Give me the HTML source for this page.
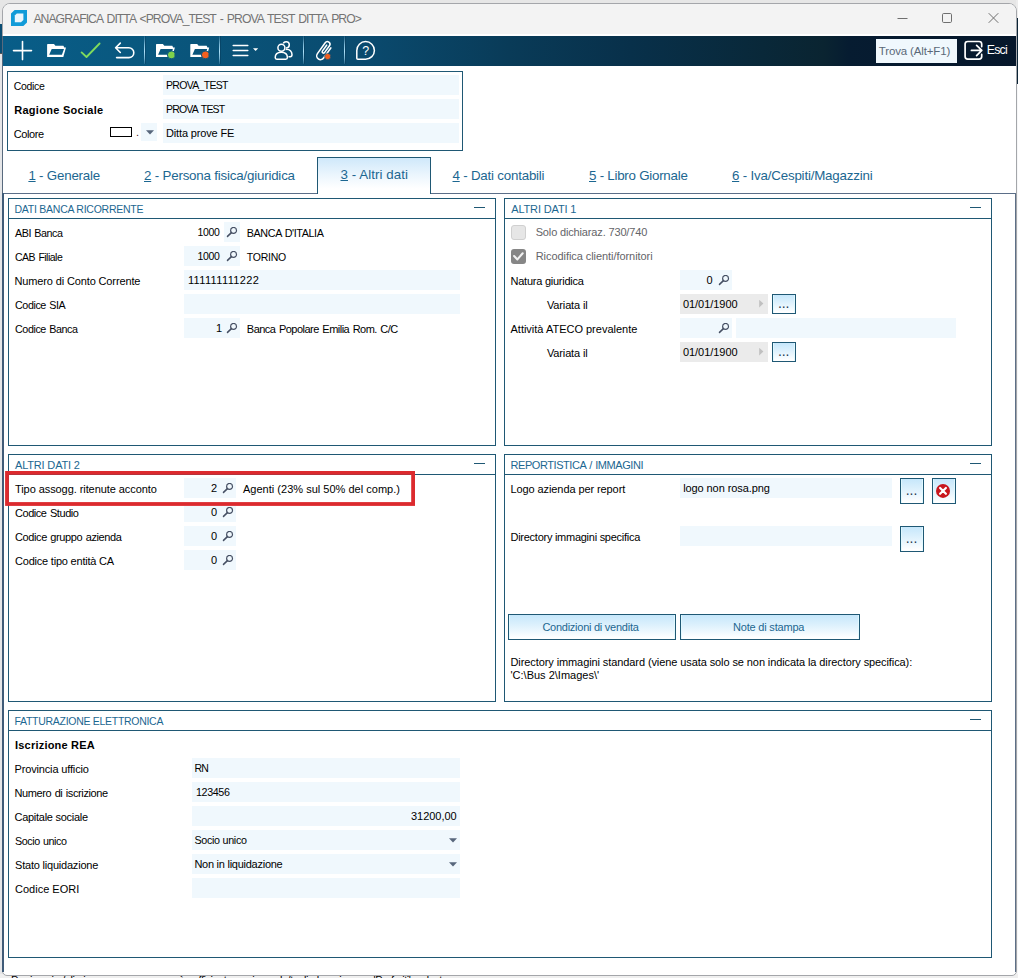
<!DOCTYPE html>
<html lang="it">
<head>
<meta charset="utf-8">
<title>ANAGRAFICA DITTA</title>
<style>
*{box-sizing:border-box;margin:0;padding:0}
html,body{width:1018px;height:978px;overflow:hidden}
body{position:relative;background:#e6e6e6;font-family:"Liberation Sans",sans-serif;font-size:11px;color:#000;letter-spacing:-0.1px}
body div,body span,body svg{position:absolute;white-space:nowrap}
/* main window */
#win{left:2px;top:3px;width:1015px;height:973px;border:1px solid #a4a6aa;border-radius:8px 8px 5px 5px;background:#fff;overflow:hidden}
#title{left:3px;top:4px;width:1013px;height:30px;background:#f3f3f3;border-radius:7px 7px 0 0}
#tbar{left:3px;top:36px;width:1013px;height:30px;background:linear-gradient(90deg,#085d88 0%,#09587f 13%,#0a4a6e 36%,#093b58 50%,#08304a 62%,#092839 75%,#0a2431 81%,#061c31 83.5%,#06172b 100%)}
.sep{top:36px;width:1px;height:28px;background:linear-gradient(rgba(150,210,240,.12),rgba(160,216,244,.75) 30%,rgba(172,224,248,1) 55%,rgba(160,216,244,.7) 80%,rgba(150,210,240,.15));box-shadow:1px 0 0 rgba(4,40,66,.28)}
.l{font-size:11px;line-height:14px;color:#000}
.f{background:#f0f8fd;height:20px}
.g{background:#ebebeb}
.p{border:1px solid #1f5874;background:#fff}
.ph{left:0;top:0;right:0;height:20px;border-bottom:1px solid #1f5874;color:#1c6791;font-size:11px;line-height:14px;}
.mn{right:10px;top:8px;width:11px;height:1px;background:#1f5874}
.tab{font-size:13.33px;line-height:16px;color:#1c6791;letter-spacing:-0.2px}
.b{border:1px solid #1f5874;background:linear-gradient(#c6e7fb 0%,#d9effc 35%,#eef8fe 70%,#fff 95%);box-shadow:inset 1px 0 0 rgba(225,250,255,.9),inset -1px 0 0 rgba(225,250,255,.9);color:#1c6791;text-align:center;font-size:11px;line-height:14px}
</style>
</head>
<body>
<!-- slivers of the window behind -->
<div style="left:0;top:0;width:1018px;height:24px;background:#e6e6e6"></div>
<div style="left:0;top:24px;width:2px;height:29px;background:#0a4d73"></div>
<div style="left:0;top:53px;width:2px;height:925px;background:#e5e6e8"></div>
<div style="left:0;top:53px;width:2px;height:1px;background:#555"></div>
<div style="left:1016px;top:0;width:2px;height:18px;background:#ececec"></div>
<div style="left:1016px;top:18px;width:2px;height:66px;background:#0b2436"></div>
<div style="left:1016px;top:84px;width:2px;height:894px;background:#f6f7f8"></div>
<div style="left:0;top:974px;width:1018px;height:4px;background:#efefef"></div>
<div class="l" style="left:11.00px;top:973px;letter-spacing:-0.476px;word-spacing:0.84px">Per inserire/eliminare un programma è sufficiente aggiungerlo/toglierlo nei menu 'Preferiti' a destra</div>


<div id="win"></div>
<div id="title"></div>
<div id="tbar"></div>

<svg style="left:4px;top:36px" width="1012" height="30" viewBox="4 36 1012 30" fill="none" stroke="#fff" stroke-width="1.6" stroke-linecap="round" stroke-linejoin="round">
<!-- plus -->
<path d="M13.5 50.6H31.5M22.5 41.6V59.6"/>
<!-- folder open -->
<path transform="translate(47.1 44)" d="M0 0.7Q0 0 0.7 0H6.9L8.3 1.8H16.3L17.2 3.6H18.9L16.2 12.9H0ZM4.6 5H16.9L14.8 10.8H2.1Z" fill="#fff" fill-rule="evenodd" stroke="none"/>
<!-- check -->
<path d="M81.6 52.4L86.5 57L99.6 43.5" stroke="#80dc5c" stroke-width="1.8"/>
<!-- undo -->
<path d="M115.8 47.8H128.9A4.9 4.9 0 0 1 128.9 57.6H116.6M120.3 43.1L115.6 47.8L120.3 52.5"/>
<!-- folder + green dot -->
<path transform="translate(156 44)" d="M0 0.7Q0 0 0.7 0H6.9L8.3 1.8H16.3L17.2 3.6H18.9L16.2 12.9H0ZM4.6 5H16.9L14.8 10.8H2.1Z" fill="#fff" fill-rule="evenodd" stroke="none"/>
<circle cx="171.3" cy="54.9" r="3.9" fill="#7ed14b" stroke="#0a567f" stroke-width="1"/>
<!-- folder + orange dot -->
<path transform="translate(190.3 44)" d="M0 0.7Q0 0 0.7 0H6.9L8.3 1.8H16.3L17.2 3.6H18.9L16.2 12.9H0ZM4.6 5H16.9L14.8 10.8H2.1Z" fill="#fff" fill-rule="evenodd" stroke="none"/>
<circle cx="205.3" cy="54.9" r="3.9" fill="#f2601f" stroke="#0a547c" stroke-width="1"/>
<!-- menu -->
<path d="M233.2 45.4H247.8M233.2 50.4H247.8M233.2 55.4H247.8" stroke-width="1.5"/>
<path d="M253 48.2H258.2L255.6 51Z" fill="#fff" stroke="none"/>
<!-- users -->
<circle cx="286.2" cy="44.8" r="3.1" stroke-width="1.5"/>
<path d="M285.9 49.4C289.8 48.9 292 51.6 292 54.6Q292 56.8 290.3 56.8H288.2" stroke-width="1.5"/>
<circle cx="281.4" cy="47.75" r="3.5" fill="#0a4f76" stroke="#0a4f76" stroke-width="2.3"/>
<path d="M275.2 57.6C275.2 54 277.8 52.2 281.3 52.2C284.8 52.2 287.4 54 287.4 57.6Q287.4 59.3 285.8 59.3H276.8Q275.2 59.3 275.2 57.6Z" fill="#0a4f76" stroke="#0a4f76" stroke-width="2.3"/>
<circle cx="281.4" cy="47.75" r="3.5" stroke-width="1.5"/>
<path d="M275.2 57.6C275.2 54 277.8 52.2 281.3 52.2C284.8 52.2 287.4 54 287.4 57.6Q287.4 59.3 285.8 59.3H276.8Q275.2 59.3 275.2 57.6Z" stroke-width="1.5"/>
<!-- paper clip -->
<path d="M330.82 47.93L323.59 58.02A3.8 3.8 0 0 1 317.41 53.58L325.22 42.69A2.6 2.6 0 0 1 329.45 45.72L324.49 52.63A1.3 1.3 0 0 1 322.38 51.12L326.64 45.18" stroke-width="1.55"/>
<circle cx="327.7" cy="56.5" r="3.1" fill="#f2601f" stroke="#09507a" stroke-width="0.6"/>
<!-- help bubble -->
<path d="M356.8 58.2V50.4A8.8 8.8 0 1 1 365.6 59.2H357.8Q356.8 59.2 356.8 58.2Z" stroke-width="1.5"/>
</svg>
<div class="sep" style="left:144px"></div><div class="sep" style="left:219px"></div><div class="sep" style="left:303px"></div><div class="sep" style="left:344px"></div>
<!-- search box -->
<div style="left:876px;top:39px;width:81px;height:24px;background:#f0f8fd"></div>
<!-- exit -->
<svg style="left:963px;top:39px" width="22" height="23" viewBox="963 39 22 23" fill="none" stroke="#fff" stroke-width="1.7" stroke-linecap="round" stroke-linejoin="round">
<path d="M981.7 46.6V44.1A2.6 2.6 0 0 0 979.1 41.5H967.7A2.6 2.6 0 0 0 965.1 44.1V56.6A2.6 2.6 0 0 0 967.7 59.2H979.1A2.6 2.6 0 0 0 981.7 56.6V54.4"/>
<path d="M971.4 50.4H981.6M976.6 45.4L981.8 50.4L976.6 55.6"/>
</svg>
<!-- window controls -->
<svg style="left:890px;top:8px" width="120" height="20" viewBox="890 8 120 20" fill="none" stroke="#6f6f6f" stroke-width="1">
<path d="M897.5 18.5H907.5"/>
<rect x="942.5" y="13.5" width="9" height="9" rx="1.2"/>
<path d="M988.7 13.2L998.3 22.8M998.3 13.2L988.7 22.8"/>
</svg>
<!-- app icon -->
<svg style="left:11px;top:10px" width="16" height="16" viewBox="0 0 16 16"><path d="M3.6 0H16V12.4L12.4 16H0V3.6Z" fill="#119bd8"/><path d="M5.8 3.6H12.4V10L10 12.2H3.8V5.6Z" fill="#eaf6fd"/></svg>
<div class="l" style="left:33.40px;top:12px;letter-spacing:-0.946px;word-spacing:1.60px;font-size:12.2px;line-height:15px;color:#747474">ANAGRAFICA DITTA &lt;PROVA_TEST - PROVA TEST DITTA PRO&gt;</div>
<div class="l" style="left:878.80px;top:44px;letter-spacing:-0.150px;font-size:11.5px;color:#5a6878">Trova (Alt+F1)</div>
<div class="l" style="left:986.80px;top:43px;letter-spacing:-0.766px;font-size:12.3px;color:#fff">Esci</div>
<div class="l" style="left:362.30px;top:44px;letter-spacing:-0.600px;font-size:12.5px;color:#fff">?</div>


<div class="p" style="left:7px;top:71px;width:456px;height:80px"></div>
<div class="l" style="left:13.70px;top:79px;letter-spacing:-0.309px;font-size:10.5px">Codice</div>
<div class="l" style="left:14.20px;top:103px;letter-spacing:0.282px"><b>Ragione Sociale</b></div>
<div class="l" style="left:13.70px;top:127px;letter-spacing:-0.397px">Colore</div>
<div class="f" style="left:163px;top:75px;width:296px"></div>
<div class="l" style="left:166.00px;top:78px;letter-spacing:-0.693px;font-size:10.5px">PROVA_TEST</div>
<div class="f" style="left:163px;top:99px;width:296px"></div>
<div class="l" style="left:166.00px;top:102px;letter-spacing:-0.796px;word-spacing:1.41px;font-size:10.5px">PROVA TEST</div>
<div class="f" style="left:163px;top:123px;width:296px"></div>
<div class="l" style="left:166.00px;top:126px;letter-spacing:-0.151px">Ditta prove FE</div>
<div style="left:110px;top:127px;width:22px;height:10px;border:1px solid #000;background:#fff"></div>
<div class="l" style="left:135.90px;top:125px;letter-spacing:-0.900px;color:#4a2222">.</div>
<div class="f" style="left:141px;top:123px;width:16px;height:18px"></div>
<svg style="left:146px;top:130px" width="8" height="5" viewBox="0 0 8 5"><path d="M0 0.3H8L4 4.6Z" fill="#58677c"/></svg>


<div style="left:3px;top:193px;width:1013px;height:1px;background:#5b6e88"></div>
<div style="left:317px;top:157px;width:114px;height:37px;border:1px solid #1f5874;border-bottom:none;background:linear-gradient(#cfe8fa,#eaf5fd 45%,#fff 85%)"></div>
<div class="tab" style="left:28.40px;top:168px;letter-spacing:-0.207px;font-size:13.33px;line-height:16px"><u>1</u> - Generale</div>
<div class="tab" style="left:144.00px;top:168px;letter-spacing:-0.196px;font-size:13.33px;line-height:16px"><u>2</u> - Persona fisica/giuridica</div>
<div class="tab" style="left:340.50px;top:167px;letter-spacing:0.060px;font-size:13.33px;line-height:16px"><u>3</u> - Altri dati</div>
<div class="tab" style="left:452.50px;top:168px;letter-spacing:-0.206px;font-size:13.33px;line-height:16px"><u>4</u> - Dati contabili</div>
<div class="tab" style="left:589.00px;top:168px;letter-spacing:-0.245px;font-size:13.33px;line-height:16px"><u>5</u> - Libro Giornale</div>
<div class="tab" style="left:732.00px;top:168px;letter-spacing:-0.188px;font-size:13.33px;line-height:16px"><u>6</u> - Iva/Cespiti/Magazzini</div>
<div style="left:2px;top:36px;width:1px;height:158px;background:#586a7e"></div>
<div style="left:2px;top:193px;width:2px;height:779px;background:#3f5b78"></div>
<div style="left:1015px;top:193px;width:1px;height:779px;background:#5d6f86"></div>


<div class="p" style="left:8px;top:198px;width:488px;height:248px"><div class="ph"></div><div class="mn"></div></div>
<div class="l" style="left:14.50px;top:202px;letter-spacing:-0.250px;font-size:10.5px;color:#1c6791">DATI BANCA RICORRENTE</div>
<div class="l" style="left:15.00px;top:226px;letter-spacing:-0.465px;word-spacing:0.80px;font-size:10.75px">ABI Banca</div>
<div class="f" style="left:224px;top:222px;width:16px"></div>
<div class="l" style="left:197.60px;top:225px;letter-spacing:-0.373px;font-size:10.5px">1000</div>
<svg style="left:226px;top:227px" width="12" height="12" viewBox="0 0 12 12"><circle cx="7.56" cy="3.4" r="2.95" fill="none" stroke="#465064" stroke-width="1.2"/><path d="M5.4 5.6L1.5 9.4" stroke="#465064" stroke-width="1.5" stroke-linecap="round"/></svg>
<div class="l" style="left:246.80px;top:226px;letter-spacing:-0.383px;word-spacing:0.72px;font-size:10.75px">BANCA D'ITALIA</div>
<div class="l" style="left:15.00px;top:250px;letter-spacing:-0.511px;word-spacing:0.92px;font-size:10.5px">CAB Filiale</div>
<div class="f" style="left:184px;top:246px;width:56px"></div>
<div class="l" style="left:197.60px;top:249px;letter-spacing:-0.373px;font-size:10.5px">1000</div>
<svg style="left:226px;top:251px" width="12" height="12" viewBox="0 0 12 12"><circle cx="7.56" cy="3.4" r="2.95" fill="none" stroke="#465064" stroke-width="1.2"/><path d="M5.4 5.6L1.5 9.4" stroke="#465064" stroke-width="1.5" stroke-linecap="round"/></svg>
<div class="l" style="left:246.80px;top:250px;letter-spacing:-0.255px;font-size:10.5px">TORINO</div>
<div class="l" style="left:14.50px;top:274px;letter-spacing:-0.134px">Numero di Conto Corrente</div>
<div class="f" style="left:184px;top:270px;width:276px"></div>
<div class="l" style="left:187.90px;top:273px;letter-spacing:0.376px">111111111222</div>
<div class="l" style="left:15.00px;top:298px;letter-spacing:-0.429px;word-spacing:0.76px;font-size:10.75px">Codice SIA</div>
<div class="f" style="left:184px;top:294px;width:276px"></div>
<div class="l" style="left:15.00px;top:322px;letter-spacing:-0.431px;word-spacing:0.79px;font-size:10.75px">Codice Banca</div>
<div class="f" style="left:184px;top:318px;width:56px"></div>
<div class="l" style="left:216.00px;top:321px;letter-spacing:-2.000px">1</div>
<svg style="left:226px;top:323px" width="12" height="12" viewBox="0 0 12 12"><circle cx="7.56" cy="3.4" r="2.95" fill="none" stroke="#465064" stroke-width="1.2"/><path d="M5.4 5.6L1.5 9.4" stroke="#465064" stroke-width="1.5" stroke-linecap="round"/></svg>
<div class="l" style="left:246.80px;top:322px;letter-spacing:-0.502px;word-spacing:0.85px">Banca Popolare Emilia Rom. C/C</div>


<div class="p" style="left:504px;top:198px;width:488px;height:248px"><div class="ph"></div><div class="mn"></div></div>
<div class="l" style="left:511.20px;top:202px;letter-spacing:-0.146px;color:#1c6791">ALTRI DATI 1</div>
<div style="left:511px;top:225px;width:15px;height:15px;border:1px solid #d0d0d0;border-radius:3px;background:#e6e6e6"></div>
<div style="left:511px;top:249px;width:15px;height:15px;border-radius:3px;background:#868686"></div>
<svg style="left:511px;top:249px" width="15" height="15" viewBox="0 0 15 15"><path d="M3.1 7.1L6.4 10.4L11.7 4.3" fill="none" stroke="#f2f2f2" stroke-width="2.1" stroke-linecap="round" stroke-linejoin="round"/></svg>
<div class="l" style="left:535.70px;top:225px;letter-spacing:-0.152px;color:#646468">Solo dichiaraz. 730/740</div>
<div class="l" style="left:535.70px;top:249px;letter-spacing:-0.061px;color:#646468">Ricodifica clienti/fornitori</div>
<div class="l" style="left:510.50px;top:274px;letter-spacing:-0.241px">Natura giuridica</div>
<div class="f" style="left:680px;top:270px;width:52px"></div>
<div class="l" style="left:706.60px;top:273px;letter-spacing:-0.600px">0</div>
<svg style="left:718px;top:275px" width="12" height="12" viewBox="0 0 12 12"><circle cx="7.56" cy="3.4" r="2.95" fill="none" stroke="#465064" stroke-width="1.2"/><path d="M5.4 5.6L1.5 9.4" stroke="#465064" stroke-width="1.5" stroke-linecap="round"/></svg>
<div class="l" style="left:546.90px;top:298px;letter-spacing:-0.126px">Variata il</div>
<div class="f g" style="left:680px;top:294px;width:88px"></div>
<div class="l" style="left:682.90px;top:297px;letter-spacing:-0.037px">01/01/1900</div>
<div class="l" style="left:510.50px;top:322px;letter-spacing:-0.006px">Attività ATECO prevalente</div>
<div class="f" style="left:680px;top:318px;width:52px"></div>
<svg style="left:718px;top:323px" width="12" height="12" viewBox="0 0 12 12"><circle cx="7.56" cy="3.4" r="2.95" fill="none" stroke="#465064" stroke-width="1.2"/><path d="M5.4 5.6L1.5 9.4" stroke="#465064" stroke-width="1.5" stroke-linecap="round"/></svg>
<div class="f" style="left:736px;top:318px;width:220px"></div>
<div class="l" style="left:546.90px;top:346px;letter-spacing:-0.126px">Variata il</div>
<div class="f g" style="left:680px;top:342px;width:88px"></div>
<div class="l" style="left:682.90px;top:345px;letter-spacing:-0.037px">01/01/1900</div>
<svg style="left:759px;top:300px" width="5" height="8" viewBox="0 0 5 8"><path d="M0.2 -0.2L4.4 3.6L0.2 7.4Z" fill="#c0c0c0"/></svg>
<div class="b" style="left:772px;top:294px;width:24px;height:20px"></div>
<div class="l" style="left:777.90px;top:296px;letter-spacing:-0.140px;font-size:14px;color:#1d3a52">...</div>
<svg style="left:759px;top:348px" width="5" height="8" viewBox="0 0 5 8"><path d="M0.2 -0.2L4.4 3.6L0.2 7.4Z" fill="#c0c0c0"/></svg>
<div class="b" style="left:772px;top:342px;width:24px;height:20px"></div>
<div class="l" style="left:777.90px;top:344px;letter-spacing:-0.140px;font-size:14px;color:#1d3a52">...</div>


<div class="p" style="left:8px;top:454px;width:488px;height:248px"><div class="ph"></div><div class="mn"></div></div>
<div class="l" style="left:15.00px;top:458px;letter-spacing:-0.174px;color:#1c6791">ALTRI DATI 2</div>
<div class="l" style="left:15.00px;top:482px;letter-spacing:-0.074px">Tipo assogg. ritenute acconto</div>
<div class="f" style="left:184px;top:478px;width:52px"></div>
<div class="l" style="left:211.00px;top:481px;letter-spacing:-1.000px">2</div>
<svg style="left:222px;top:483px" width="12" height="12" viewBox="0 0 12 12"><circle cx="7.56" cy="3.4" r="2.95" fill="none" stroke="#465064" stroke-width="1.2"/><path d="M5.4 5.6L1.5 9.4" stroke="#465064" stroke-width="1.5" stroke-linecap="round"/></svg>
<div class="l" style="left:243.00px;top:482px;letter-spacing:0.015px">Agenti (23% sul 50% del comp.)</div>
<div class="l" style="left:15.00px;top:506px;letter-spacing:-0.451px;word-spacing:0.84px">Codice Studio</div>
<div class="f" style="left:184px;top:502px;width:52px"></div>
<div class="l" style="left:210.90px;top:505px;letter-spacing:-0.700px">0</div>
<svg style="left:222px;top:507px" width="12" height="12" viewBox="0 0 12 12"><circle cx="7.56" cy="3.4" r="2.95" fill="none" stroke="#465064" stroke-width="1.2"/><path d="M5.4 5.6L1.5 9.4" stroke="#465064" stroke-width="1.5" stroke-linecap="round"/></svg>
<div class="l" style="left:15.00px;top:530px;letter-spacing:-0.379px;word-spacing:0.68px">Codice gruppo azienda</div>
<div class="f" style="left:184px;top:526px;width:52px"></div>
<div class="l" style="left:210.90px;top:529px;letter-spacing:-0.700px">0</div>
<svg style="left:222px;top:531px" width="12" height="12" viewBox="0 0 12 12"><circle cx="7.56" cy="3.4" r="2.95" fill="none" stroke="#465064" stroke-width="1.2"/><path d="M5.4 5.6L1.5 9.4" stroke="#465064" stroke-width="1.5" stroke-linecap="round"/></svg>
<div class="l" style="left:15.00px;top:554px;letter-spacing:-0.210px">Codice tipo entità CA</div>
<div class="f" style="left:184px;top:550px;width:52px"></div>
<div class="l" style="left:210.90px;top:553px;letter-spacing:-0.700px">0</div>
<svg style="left:222px;top:555px" width="12" height="12" viewBox="0 0 12 12"><circle cx="7.56" cy="3.4" r="2.95" fill="none" stroke="#465064" stroke-width="1.2"/><path d="M5.4 5.6L1.5 9.4" stroke="#465064" stroke-width="1.5" stroke-linecap="round"/></svg>
<svg style="left:4px;top:470px" width="413" height="38" viewBox="4 470 413 38"><rect x="7" y="472.9" width="406.1" height="31.1" fill="none" stroke="#dc2a2e" stroke-width="3.8"/></svg>


<div class="p" style="left:504px;top:454px;width:488px;height:248px"><div class="ph"></div><div class="mn"></div></div>
<div class="l" style="left:510.50px;top:458px;letter-spacing:-0.433px;word-spacing:0.79px;color:#1c6791">REPORTISTICA / IMMAGINI</div>
<div class="l" style="left:510.50px;top:482px;letter-spacing:-0.093px">Logo azienda per report</div>
<div class="f" style="left:680px;top:478px;width:212px"></div>
<div class="l" style="left:683.20px;top:481px;letter-spacing:-0.091px">logo non rosa.png</div>
<div class="l" style="left:510.50px;top:530px;letter-spacing:-0.263px">Directory immagini specifica</div>
<div class="f" style="left:680px;top:526px;width:212px"></div>
<div class="b" style="left:900px;top:478px;width:24px;height:26px"></div>
<div class="l" style="left:905.80px;top:483px;letter-spacing:-0.090px;font-size:14px;color:#1d3a52">...</div>
<div class="b" style="left:932px;top:478px;width:24px;height:26px"></div>
<svg style="left:935px;top:483px" width="16" height="16" viewBox="0 0 16 16"><circle cx="8" cy="7.9" r="7" fill="#c8161d"/><path d="M5.1 5L10.9 10.8M10.9 5L5.1 10.8" stroke="#fff" stroke-width="2.2" stroke-linecap="round"/></svg>
<div class="b" style="left:900px;top:526px;width:24px;height:26px"></div>
<div class="l" style="left:905.80px;top:531px;letter-spacing:-0.090px;font-size:14px;color:#1d3a52">...</div>
<div class="b" style="left:508px;top:614px;width:168px;height:26px"></div>
<div class="l" style="left:542.40px;top:620px;letter-spacing:-0.255px;color:#1c6791">Condizioni di vendita</div>
<div class="b" style="left:680px;top:614px;width:180px;height:26px"></div>
<div class="l" style="left:733.00px;top:620px;letter-spacing:-0.197px;color:#1c6791">Note di stampa</div>
<div class="l" style="left:510.50px;top:655px;letter-spacing:-0.093px">Directory immagini standard (viene usata solo se non indicata la directory specifica):</div>
<div class="l" style="left:510.50px;top:668px;letter-spacing:0.002px">'C:\Bus 2\Images\'</div>


<div class="p" style="left:8px;top:710px;width:984px;height:248px"><div class="ph"></div><div class="mn"></div></div>
<div class="l" style="left:14.50px;top:714px;letter-spacing:-0.290px;font-size:10.5px;color:#1c6791">FATTURAZIONE ELETTRONICA</div>
<div class="l" style="left:15.00px;top:738px;letter-spacing:0.209px"><b>Iscrizione REA</b></div>
<div class="l" style="left:14.50px;top:762px;letter-spacing:-0.151px">Provincia ufficio</div>
<div class="f" style="left:192px;top:758px;width:268px"></div>
<div class="l" style="left:194.60px;top:761px;letter-spacing:-0.883px;font-size:10.5px">RN</div>
<div class="l" style="left:14.50px;top:786px;letter-spacing:-0.391px;word-spacing:0.70px">Numero di iscrizione</div>
<div class="f" style="left:192px;top:782px;width:268px"></div>
<div class="l" style="left:195.90px;top:785px;letter-spacing:-0.359px;font-size:10.75px">123456</div>
<div class="l" style="left:14.50px;top:810px;letter-spacing:-0.269px">Capitale sociale</div>
<div class="f" style="left:192px;top:806px;width:268px"></div>
<div class="l" style="left:411.00px;top:809px;letter-spacing:-0.037px">31200,00</div>
<div class="l" style="left:15.00px;top:834px;letter-spacing:-0.439px;word-spacing:0.79px;font-size:10.75px">Socio unico</div>
<div class="f" style="left:192px;top:830px;width:268px"></div>
<div class="l" style="left:194.40px;top:833px;letter-spacing:-0.300px;font-size:10.75px">Socio unico</div>
<div class="l" style="left:15.00px;top:858px;letter-spacing:-0.207px">Stato liquidazione</div>
<div class="f" style="left:192px;top:854px;width:268px"></div>
<div class="l" style="left:194.40px;top:857px;letter-spacing:-0.257px">Non in liquidazione</div>
<div class="l" style="left:15.00px;top:882px;letter-spacing:0.007px">Codice EORI</div>
<div class="f" style="left:192px;top:878px;width:268px"></div>
<svg style="left:449px;top:838px" width="8" height="5" viewBox="0 0 8 5"><path d="M0 0.3H8L4 4.6Z" fill="#58677c"/></svg>
<svg style="left:449px;top:862px" width="8" height="5" viewBox="0 0 8 5"><path d="M0 0.3H8L4 4.6Z" fill="#58677c"/></svg>


</body>
</html>
